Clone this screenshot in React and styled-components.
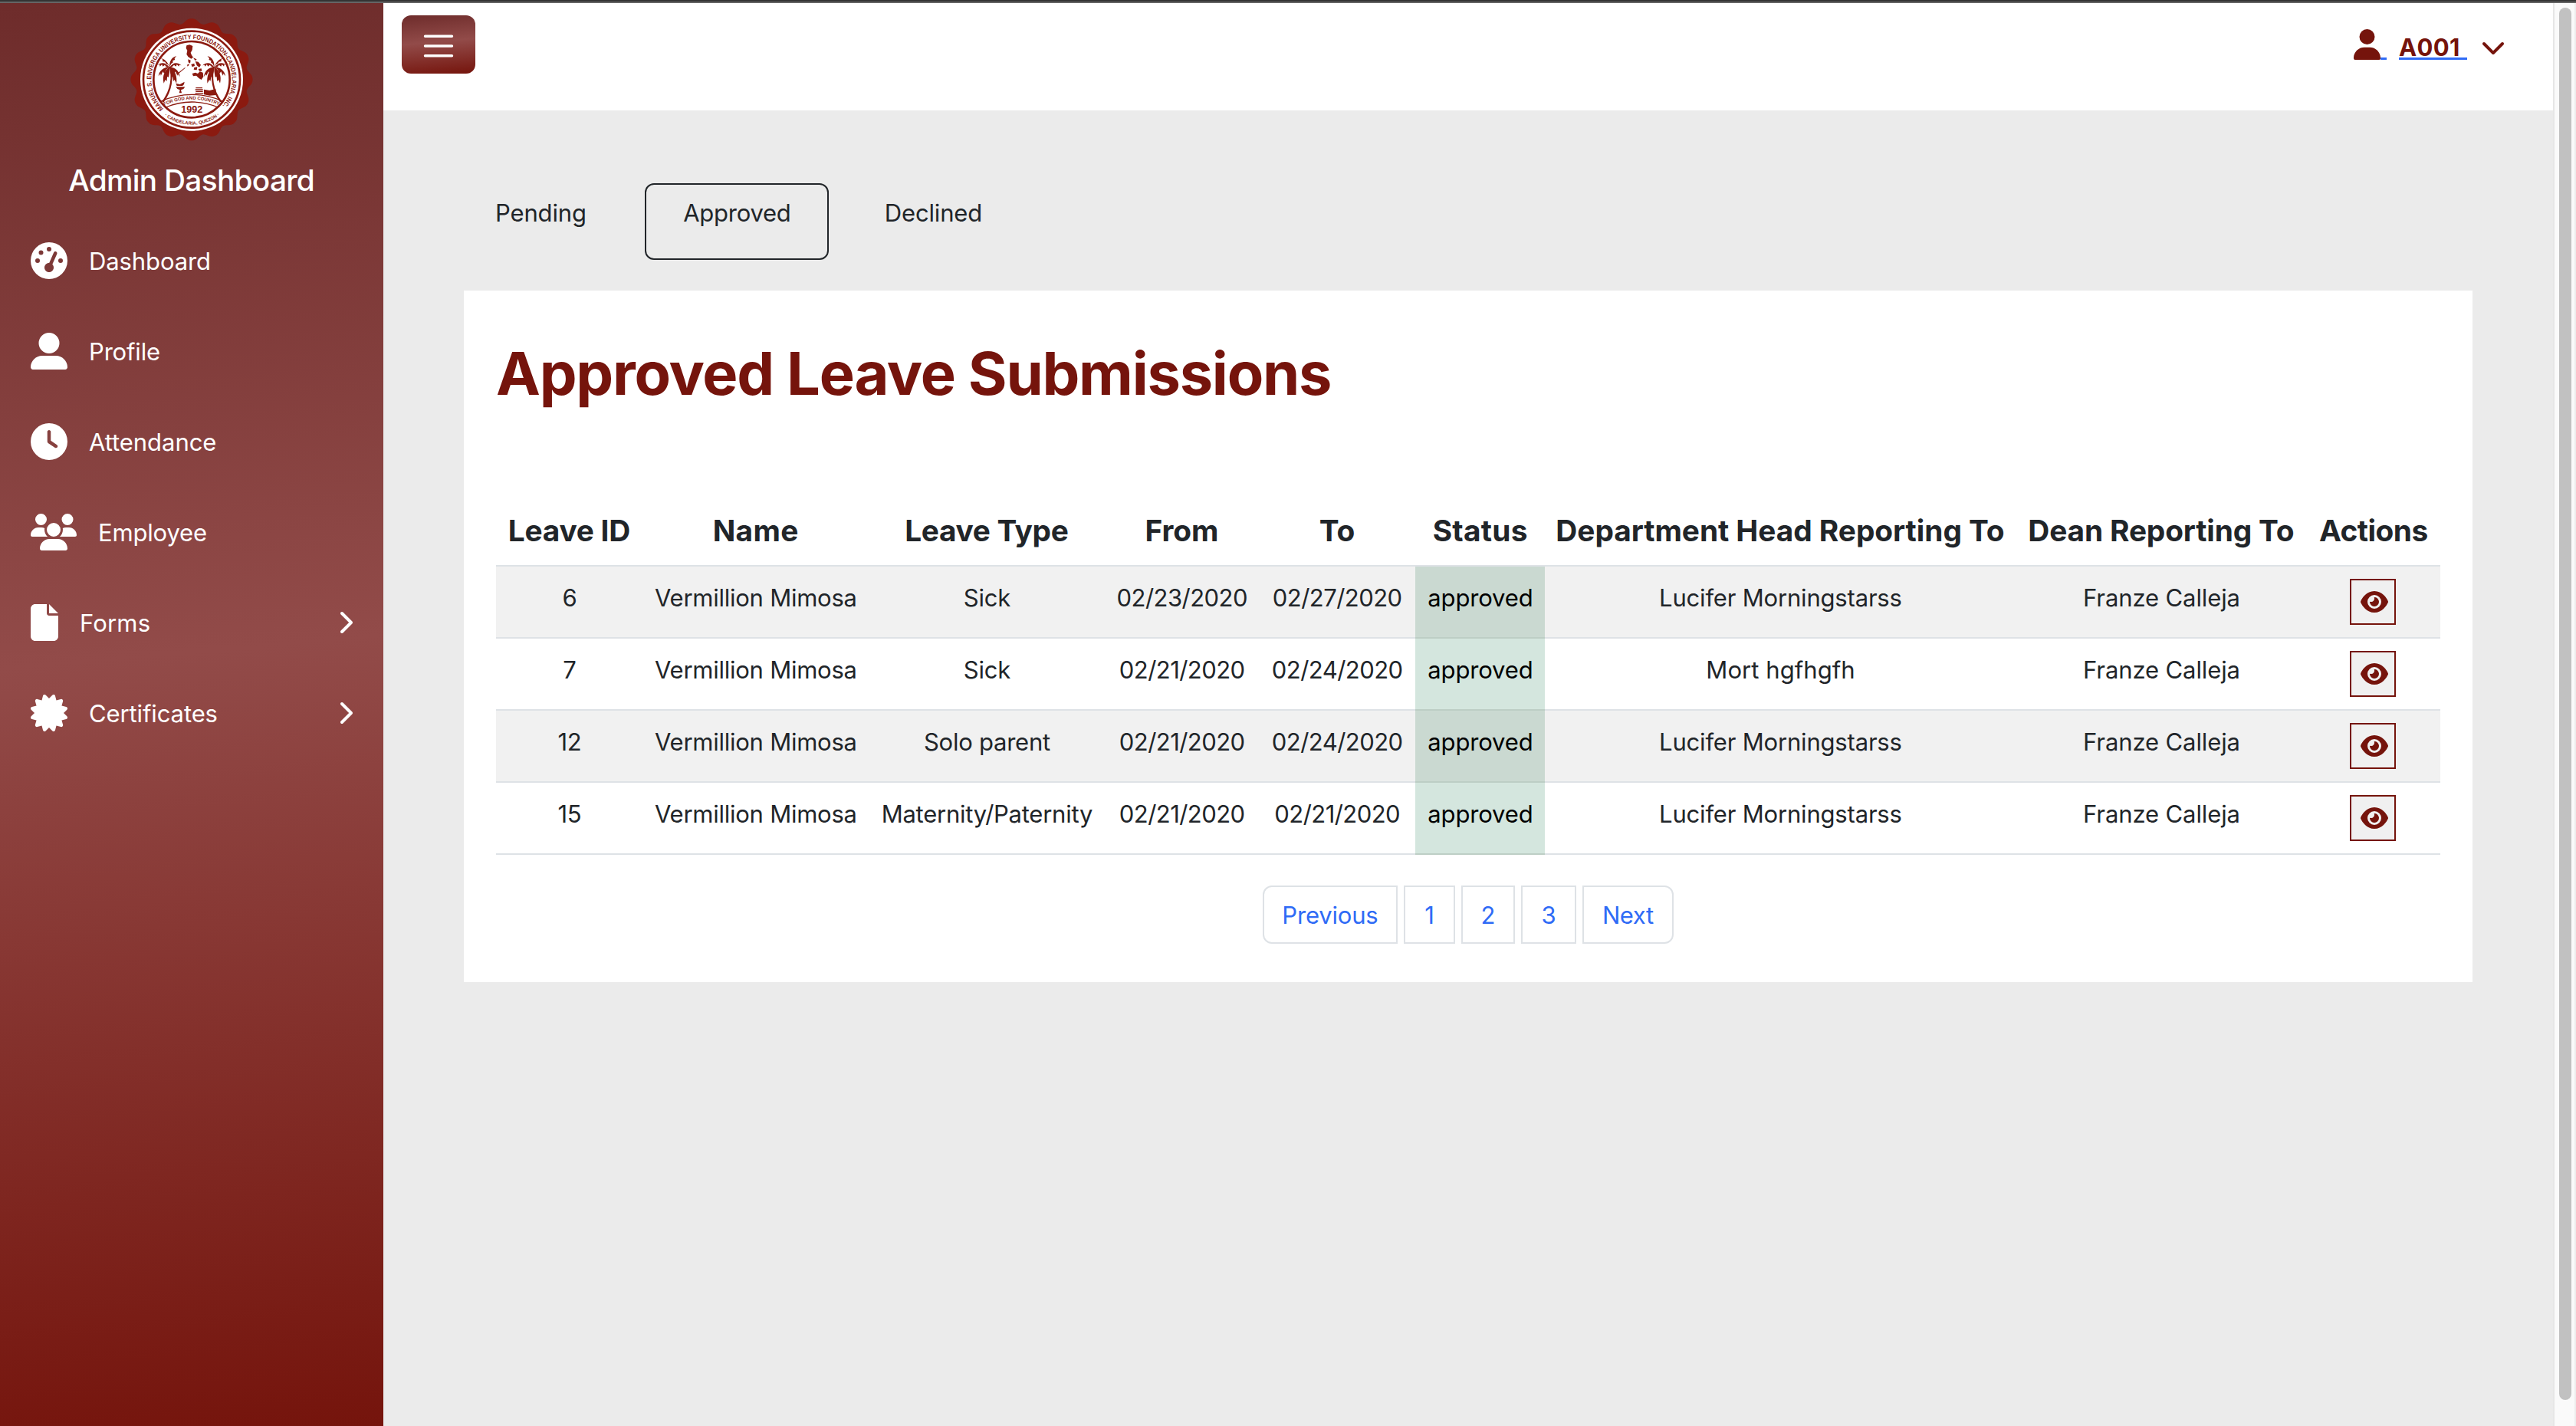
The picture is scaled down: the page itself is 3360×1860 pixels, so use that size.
import React from "react";
import styled, { createGlobalStyle, css } from "styled-components";
import {
  FaGaugeHigh,
  FaUserLarge,
  FaClock,
  FaUsers,
  FaFile,
  FaCertificate,
  FaChevronRight,
  FaChevronDown,
  FaUser,
  FaEye,
} from "react-icons/fa6";

const MAROON = "#75140c";
const LINK = "#2f6bf6";
const BORDER = "#dee2e6";
const INK = "#212529";
const SEAL = "#8b1a10";
const WINE = "linear-gradient(175deg, #6e2c2b 0%, #924b49 45.7%, #75140c 100%)";

const GlobalStyle = createGlobalStyle`
  *, *::before, *::after { box-sizing: border-box; }
  body {
    margin: 0;
    background: #ebebeb;
    color: ${INK};
    font-family: Inter, "Liberation Sans", sans-serif;
    font-size: 31.04px;
    line-height: 48px;
  }
  svg { display: block; flex: none; }
`;

const Page = styled.div`
  display: flex;
  flex-direction: column;
  height: 1860px;
  overflow: hidden;
`;

const TopEdge = styled.div`
  flex: none;
  height: 4px;
  background: #333;
  border-bottom: 2px solid #656565;
`;

const Shell = styled.div`
  flex: 1;
  display: grid;
  grid-template-columns: 500px 1fr 30px;
  min-height: 0;
`;

const Tracked = styled.span`
  letter-spacing: ${(p) => p.$em || 0}em;
  margin-right: ${(p) => -(p.$em || 0)}em;
  white-space: nowrap;
`;

const Icon = styled.span`
  display: block;
  flex: none;
  width: ${(p) => p.$w}px;
  height: ${(p) => p.$h}px;

  svg {
    width: 100%;
    height: 100%;
  }
`;

/* Sidebar */

const Sidebar = styled.aside`
  display: flex;
  flex-direction: column;
  padding-top: 12px;
  background: ${WINE};
  color: #fff;
`;

const Brand = styled.div`
  display: flex;
  flex-direction: column;
  align-items: center;
  gap: 19px;
  margin-bottom: 22px;
`;

const BrandTitle = styled.div`
  font-size: 38.8px;
  font-weight: 500;
`;

const NavItem = styled.a`
  display: flex;
  align-items: center;
  height: 118px;
  padding: 0 40px;
  gap: 28px;
`;

const NavLabel = styled.span`
  flex: 1;
  padding-top: 2px;
`;

/* Header */

const Content = styled.div`
  display: flex;
  flex-direction: column;
`;

const Header = styled.header`
  display: flex;
  justify-content: space-between;
  align-items: flex-start;
  height: 140px;
  padding: 16px 62px 0 24px;
  background: #fff;
`;

const MenuButton = styled.button`
  display: flex;
  align-items: center;
  justify-content: center;
  width: 96px;
  height: 76px;
  padding: 4px 0 0;
  border: 0;
  border-radius: 12px;
  background: ${WINE};
`;

const UserMenu = styled.div`
  display: flex;
  align-items: flex-end;
  height: 40px;
  margin-top: 18px;
  color: ${MAROON};
`;

const LinkGap = styled.span`
  width: 8px;
  height: 3px;
  margin-right: 16px;
  background: ${LINK};
`;

const UserName = styled.a`
  width: 89px;
  height: 40px;
  margin: 0 18px 0 0;
  padding-top: 10px;
  border-bottom: 3px solid ${LINK};
  line-height: 27px;
  font-weight: 700;
`;

const CaretBox = styled.span`
  padding-bottom: 1px;
`;

/* Main area */

const Main = styled.main`
  padding: 95px 105px 0;
`;

const Tabs = styled.nav`
  display: flex;
  gap: 16px;
  margin: 0 0 40px -20px;
`;

const Tab = styled.a`
  width: 240px;
  height: 100px;
  padding: 13px 0 0 1px;
  border: 2px solid ${(p) => (p.$active ? INK : "transparent")};
  border-radius: 12px;
  text-align: center;
`;

const Card = styled.section`
  padding: 60px 42px 50px;
  background: #fff;
`;

const Title = styled.h1`
  margin: 0 0 111px;
  color: ${MAROON};
  font-size: 77.6px;
  font-weight: 700;
  line-height: 96px;
`;

const Table = styled.table`
  width: 2536px;
  table-layout: fixed;
  border-collapse: separate;
  border-spacing: 0;
  text-align: center;
`;

const Col = styled.col`
  width: ${(p) => p.$w}px;
`;

const HeadCell = styled.th`
  height: 93px;
  padding: 16px 0 15px;
  border-bottom: 2px solid ${BORDER};
  font-size: 38.8px;
  font-weight: 700;
  line-height: 60px;
  vertical-align: top;
`;

const Row = styled.tr`
  background: ${(p) => (p.$striped ? "#f1f1f1" : "#fff")};
`;

const cellBase = css`
  height: 94px;
  padding: 17px 0 0 1px;
  border-bottom: 2px solid ${BORDER};
  vertical-align: top;
`;

const Cell = styled.td`
  ${cellBase}
`;

const StatusCell = styled.td`
  ${cellBase}
  background: ${(p) => (p.$striped ? "#cad9d1" : "#d4e6de")};
  border-bottom-color: #bdcec5;
  color: #000;
`;

const ActionCell = styled.td`
  ${cellBase}
  padding-top: 16px;
`;

const ViewButton = styled.button`
  display: flex;
  align-items: center;
  justify-content: center;
  width: 60px;
  height: 60px;
  margin: 0 auto 0 55px;
  padding: 0 0 0 3px;
  border: 2px solid ${MAROON};
  background: #f0f0f0;
  color: ${MAROON};
`;

const Pagination = styled.nav`
  display: flex;
  justify-content: center;
  gap: 8px;
  margin-top: 40px;
`;

const PageLink = styled.a`
  width: ${(p) => p.$w}px;
  height: 76px;
  padding-top: 13px;
  border: 2px solid ${BORDER};
  border-radius: ${(p) => p.$radius || "0"};
  color: ${LINK};
  text-align: center;
`;

/* Scrollbar */

const ScrollTrack = styled.div`
  padding: 6px 4px 34px 6px;
  border-left: 2px solid #e6e6e6;
  border-right: 2px solid #ededed;
  background: #fafafa;
`;

const ScrollThumb = styled.div`
  height: 100%;
  border-radius: 8px;
  background: #c1c1c1;
`;

/* University seal */

const CX = 270;
const CY = 263;

const scallop = (() => {
  const pts = [];
  for (let i = 0; i < 360; i += 1) {
    const a = (i * Math.PI) / 180;
    const r = 238.5 - 19 * Math.abs(Math.sin(8 * a)) ** 2.6;
    pts.push(`${(CX + r * Math.sin(a)).toFixed(1)} ${(CY - r * Math.cos(a)).toFixed(1)}`);
  }
  return `M${pts.join("L")}Z`;
})();

const polar = (r, deg) => {
  const a = (deg * Math.PI) / 180;
  return `${(CX + r * Math.sin(a)).toFixed(1)} ${(CY - r * Math.cos(a)).toFixed(1)}`;
};

const topArc = `M${polar(158, -136)}A158 158 0 1 1 ${polar(158, 132)}`;
const bottomArc = `M${polar(177, 217)}A177 177 0 0 0 ${polar(177, 140)}`;

function Palm({ transform }) {
  return (
    <g transform={transform}>
      <path d="M2 0C14 40 10 88 -28 138L-20 140C14 96 22 44 8 0Z" />
      <path d="M4 4C-12 -16 -30 -18 -46 -6L-38 -8L-36 0L-28 -8L-24 0L-16 -6L-10 2Z" />
      <path d="M4 2C-20 2 -40 18 -42 38L-34 28L-32 36L-24 20L-18 28L-10 12Z" />
      <path d="M4 2C-16 14 -28 38 -20 66L-14 52L-8 58L-6 40L0 42L4 18Z" />
      <path d="M4 2C-4 -16 -16 -30 -32 -32L-24 -26L-26 -20L-14 -18L-12 -12L-4 -8Z" />
      <path d="M4 2C2 -20 14 -38 32 -40L24 -32L26 -26L16 -22L18 -16L10 -10Z" />
      <path d="M4 4C16 -16 36 -18 52 -4L44 -6L42 0L34 -8L30 0L22 -6L14 2Z" />
      <path d="M4 2C26 4 44 18 46 40L38 30L36 36L28 20L22 28L14 12Z" />
      <path d="M6 2C26 14 36 40 32 66L24 52L20 58L16 40L12 42L6 18Z" />
    </g>
  );
}

function Seal() {
  return (
    <svg width="180" height="176" viewBox="0 0 540 528" fill={SEAL}>
      <path d={scallop} />
      <circle cx={CX} cy={CY} r="201" fill="#fff" />
      <circle cx={CX} cy={CY} r="189" fill="none" stroke={SEAL} strokeWidth="8" />
      <circle cx={CX} cy={CY} r="149" fill="none" stroke={SEAL} strokeWidth="8" />
      <path id="seal-top" d={topArc} fill="none" />
      <path id="seal-bottom" d={bottomArc} fill="none" />
      <path id="seal-motto" d="M163 365Q270 317 380 365" fill="none" />
      <g fontFamily='"Liberation Sans", sans-serif' fontWeight="700">
        <text fontSize="25" textLength="734" lengthAdjust="spacingAndGlyphs">
          <textPath href="#seal-top">MANUEL S. ENVERGA UNIVERSITY FOUNDATION-CANDELARIA, INC.</textPath>
        </text>
        <text fontSize="18" textLength="232" lengthAdjust="spacingAndGlyphs">
          <textPath href="#seal-bottom">· CANDELARIA, QUEZON ·</textPath>
        </text>
        <text fontSize="18" textLength="220" lengthAdjust="spacingAndGlyphs">
          <textPath href="#seal-motto">FOR GOD AND COUNTRY</textPath>
        </text>
        <text x="229" y="393" fontSize="41" textLength="84" lengthAdjust="spacingAndGlyphs">
          1992
        </text>
      </g>
      <path d="M150 348Q270 296 392 348" fill="none" stroke={SEAL} strokeWidth="4" />
      <path d="M168 372Q270 330 374 372" fill="none" stroke={SEAL} strokeWidth="4" />
      <Palm transform="translate(180 212) scale(0.95 1)" />
      <Palm transform="translate(362 212) scale(-0.95 1)" />
      <path d="M250 130L262 127L274 132L272 148L266 158L270 168L276 176L268 182L256 174L250 164L253 150L248 140Z" />
      <path d="M256 184L266 188L264 200L257 196ZM276 178L290 184L284 190ZM284 192L296 194L306 206L300 216L290 208ZM268 204L280 200L282 210L272 214ZM280 216L292 214L290 226L278 224ZM296 222L308 220L310 230L300 230Z" />
      <path d="M272 240L284 236L294 240L302 232L314 236L316 252L308 264L298 258L288 248L276 250Z" />
      <path d="M218 236L244 216L245 218L220 239ZM252 206L258 202L260 206L254 212Z" />
      <path d="M208 278L224 282L242 272L240 282L234 288H212ZM208 292H244L238 300L228 304L231 316H221L224 304L214 300Z" />
      <path d="M286 294H312V298H286ZM284 301H314V305H284ZM286 308H314V312H286ZM284 315H316V319H284ZM318 302L340 306L364 300L366 324L340 326L318 322Z" />
    </svg>
  );
}

function MenuLines() {
  return (
    <svg width="40" height="32" viewBox="0 0 40 32" stroke="#fff" strokeWidth="3.4" strokeLinecap="round">
      <path d="M2.5 3.2H37.5M2.5 16H37.5M2.5 28.8H37.5" />
    </svg>
  );
}

const NAV = [
  { label: "Dashboard", icon: <FaGaugeHigh />, w: 48, em: -0.0042 },
  { label: "Profile", icon: <FaUserLarge />, w: 48, em: -0.006 },
  { label: "Attendance", icon: <FaClock />, w: 48, em: -0.0024 },
  { label: "Employee", icon: <FaUsers />, w: 60, em: -0.0059 },
  { label: "Forms", icon: <FaFile />, w: 36, em: 0.005, more: true },
  { label: "Certificates", icon: <FaCertificate />, w: 48, em: -0.0041, more: true },
];

const COLUMNS = [
  { label: "Leave ID", w: 191, em: -0.0064 },
  { label: "Name", w: 295, em: 0.0086 },
  { label: "Leave Type", w: 308, em: -0.0084 },
  { label: "From", w: 201, em: 0 },
  { label: "To", w: 204, em: 0 },
  { label: "Status", w: 169, em: 0.0068 },
  { label: "Department Head Reporting To", w: 614, em: -0.0008 },
  { label: "Dean Reporting To", w: 380, em: -0.0036 },
  { label: "Actions", w: 174, em: -0.0132 },
];

const LUCIFER = { name: "Lucifer Morningstarss", em: -0.0063 };
const MORT = { name: "Mort hgfhgfh", em: 0.0017 };

const ROWS = [
  { id: 6, type: "Sick", from: "02/23/2020", to: "02/27/2020", head: LUCIFER },
  { id: 7, type: "Sick", from: "02/21/2020", to: "02/24/2020", head: MORT },
  { id: 12, type: "Solo parent", from: "02/21/2020", to: "02/24/2020", head: LUCIFER },
  { id: 15, type: "Maternity/Paternity", from: "02/21/2020", to: "02/21/2020", head: LUCIFER },
];

const PAGES = [
  { label: "Previous", w: 176, em: -0.0064, radius: "12px 0 0 12px" },
  { label: "1", w: 67 },
  { label: "2", w: 70 },
  { label: "3", w: 72 },
  { label: "Next", w: 119, em: -0.0142, radius: "0 12px 12px 0" },
];

const TABS = [
  { label: "Pending", em: -0.005 },
  { label: "Approved", em: -0.0083, active: true },
  { label: "Declined", em: -0.0054 },
];

export default function App() {
  return (
    <Page>
      <GlobalStyle />
      <TopEdge />
      <Shell>
        <Sidebar>
          <Brand>
            <Seal />
            <BrandTitle>
              <Tracked $em={-0.0181}>Admin Dashboard</Tracked>
            </BrandTitle>
          </Brand>
          {NAV.map(({ label, icon, w, em, more }) => (
            <NavItem key={label}>
              <Icon $w={w} $h={48}>
                {icon}
              </Icon>
              <NavLabel>
                <Tracked $em={em}>{label}</Tracked>
              </NavLabel>
              {more && (
                <Icon $w={20} $h={32}>
                  <FaChevronRight />
                </Icon>
              )}
            </NavItem>
          ))}
        </Sidebar>

        <Content>
          <Header>
            <MenuButton aria-label="Menu">
              <MenuLines />
            </MenuButton>
            <UserMenu>
              <Icon $w={35} $h={40}>
                <FaUser />
              </Icon>
              <LinkGap />
              <UserName>
                <Tracked $em={0.0106}>A001</Tracked>
              </UserName>
              <CaretBox>
                <Icon $w={32} $h={32}>
                  <FaChevronDown />
                </Icon>
              </CaretBox>
            </UserMenu>
          </Header>

          <Main>
            <Tabs>
              {TABS.map((t) => (
                <Tab key={t.label} $active={t.active}>
                  <Tracked $em={t.em}>{t.label}</Tracked>
                </Tab>
              ))}
            </Tabs>
            <Card>
              <Title>
                <Tracked $em={-0.0161}>Approved Leave Submissions</Tracked>
              </Title>
              <Table>
                <colgroup>
                  {COLUMNS.map((c) => (
                    <Col key={c.label} $w={c.w} />
                  ))}
                </colgroup>
                <thead>
                  <tr>
                    {COLUMNS.map((c) => (
                      <HeadCell key={c.label}>
                        <Tracked $em={c.em}>{c.label}</Tracked>
                      </HeadCell>
                    ))}
                  </tr>
                </thead>
                <tbody>
                  {ROWS.map((r, i) => {
                    const striped = i % 2 === 0;
                    return (
                      <Row key={r.id} $striped={striped}>
                        <Cell>
                          <Tracked $em={-0.01}>{r.id}</Tracked>
                        </Cell>
                        <Cell>
                          <Tracked $em={-0.0085}>Vermillion Mimosa</Tracked>
                        </Cell>
                        <Cell>
                          <Tracked $em={-0.0085}>{r.type}</Tracked>
                        </Cell>
                        <Cell>
                          <Tracked $em={-0.018}>{r.from}</Tracked>
                        </Cell>
                        <Cell>
                          <Tracked $em={-0.018}>{r.to}</Tracked>
                        </Cell>
                        <StatusCell $striped={striped}>
                          <Tracked $em={-0.0047}>approved</Tracked>
                        </StatusCell>
                        <Cell>
                          <Tracked $em={r.head.em}>{r.head.name}</Tracked>
                        </Cell>
                        <Cell>
                          <Tracked $em={-0.0039}>Franze Calleja</Tracked>
                        </Cell>
                        <ActionCell>
                          <ViewButton aria-label="View">
                            <Icon $w={36} $h={32}>
                              <FaEye />
                            </Icon>
                          </ViewButton>
                        </ActionCell>
                      </Row>
                    );
                  })}
                </tbody>
              </Table>
              <Pagination>
                {PAGES.map((p) => (
                  <PageLink key={p.label} $w={p.w} $radius={p.radius}>
                    <Tracked $em={p.em}>{p.label}</Tracked>
                  </PageLink>
                ))}
              </Pagination>
            </Card>
          </Main>
        </Content>

        <ScrollTrack>
          <ScrollThumb />
        </ScrollTrack>
      </Shell>
    </Page>
  );
}
